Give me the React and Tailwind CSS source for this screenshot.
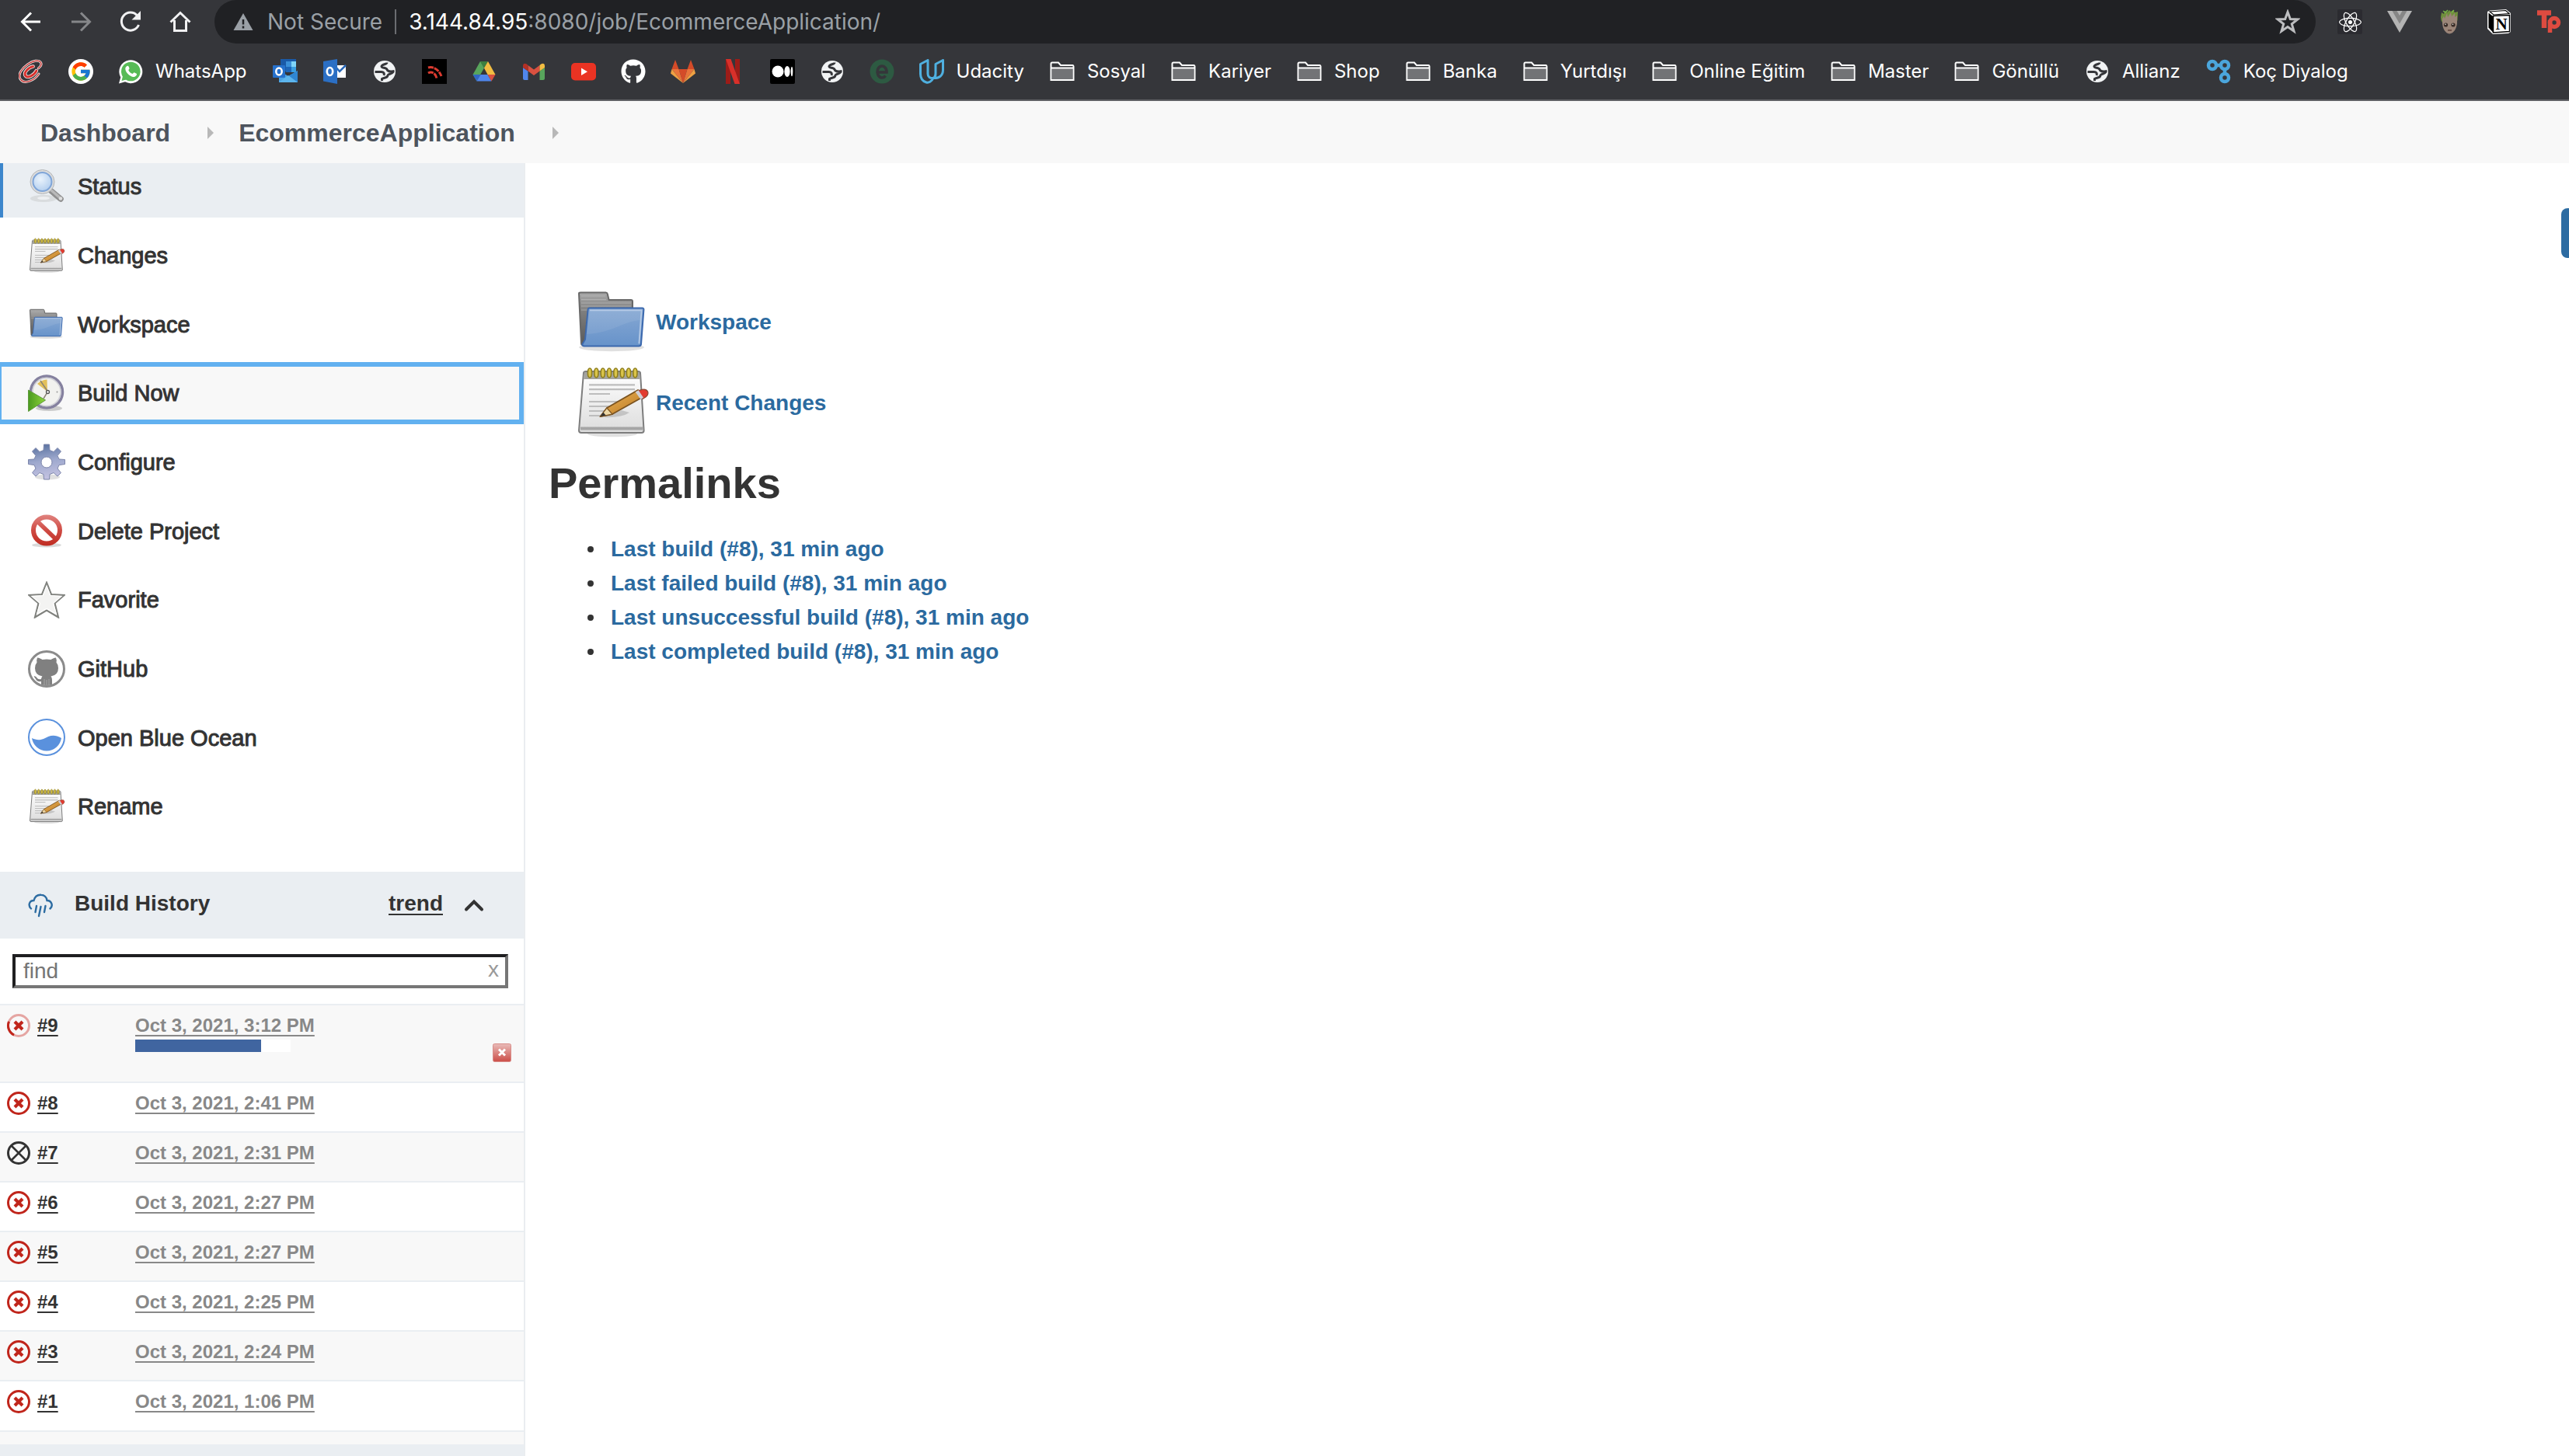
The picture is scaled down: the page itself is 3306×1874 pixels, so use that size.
import React from "react";
import { FcGoogle } from "react-icons/fc";
import { FaGithub, FaReact } from "react-icons/fa";

/* ---------- toolbar icons ---------- */

const BackIcon = () => (
  <svg viewBox="0 0 32 32" className="size-8" fill="none" stroke="#fff" strokeWidth="3">
    <path d="M28 16H5M16 4.500L4.500 16L16 27.500" />
  </svg>
);
const ForwardIcon = () => (
  <svg viewBox="0 0 32 32" className="size-8" fill="none" stroke="#86878a" strokeWidth="3">
    <path d="M4 16H27M16 4.500L27.500 16L16 27.500" />
  </svg>
);
const ReloadIcon = () => (
  <svg viewBox="0 0 32 32" className="size-8" fill="none" stroke="#f1f1f2" strokeWidth="3">
    <path d="M26.500 20A11.500 11.500 0 1 1 24.500 8" />
    <path d="M29 2V13.500H17.500Z" fill="#f1f1f2" stroke="none" />
  </svg>
);
const HomeIcon = () => (
  <svg viewBox="0 0 32 32" className="size-8" fill="none" stroke="#f1f1f2" strokeWidth="3">
    <path d="M8.500 14V27.500H23.500V14M3.500 16.500L16 4.500L28.500 16.500" />
  </svg>
);
const WarningIcon = () => (
  <svg viewBox="0 0 26 24" className="h-6 w-[26px]">
    <path d="M13 1L25.500 23H0.500Z" fill="#9aa0a6" />
    <path d="M13 9V15.500M13 17.500V20.500" stroke="#202124" strokeWidth="2.500" />
  </svg>
);
const StarIcon = () => (
  <svg viewBox="0 0 32 32" className="size-8">
    <path
      d="M16 3.500L19.300 12.600L28.800 12.900L21.300 18.800L24 28L16 22.500L8 28L10.700 18.800L3.200 12.900L12.700 12.600Z"
      fill="none"
      stroke="#bdbec0"
      strokeWidth="3"
    />
  </svg>
);

const ReactExt = () => (
  <span className="flex size-8 items-center justify-center rounded-xs bg-[#2b2b30]">
    <FaReact className="size-[29px] text-white" />
  </span>
);
const VueExt = () => (
  <svg viewBox="0 0 32 32" className="size-8">
    <path d="M0 2H32L16 30Z" fill="#b4b4b4" />
    <path d="M6.500 2H12.500L16 8L19.500 2H25.500L16 18.500Z" fill="#868686" />
  </svg>
);
const GrootExt = () => (
  <svg viewBox="0 0 32 32" className="size-8">
    <path d="M5 10L6 4L9 6L10 2L13 4L16 1L18 3L21 1L23 4L27 3L26.500 14L25 17H7L5.500 14Z" fill="#6f8f3c" />
    <path d="M8 2L11 4L14 1M19 4L22 1" stroke="#7ab648" strokeWidth="1.500" fill="none" />
    <path d="M7 12L9 9L10 12L13 5L14 10L18 4L19 9L23 5L23 10L26 8V18C25 25 22 31 16 31.500C11 31 7.500 25 7 18Z" fill="#9b8578" />
    <circle cx="11.500" cy="20" r="2.600" fill="#3a2d27" />
    <circle cx="21" cy="20" r="2.600" fill="#3a2d27" />
    <circle cx="11" cy="19.300" r="0.800" fill="#eee" />
    <circle cx="20.500" cy="19.300" r="0.800" fill="#eee" />
    <path d="M14 27H19" stroke="#5d4137" strokeWidth="1.500" />
  </svg>
);
const NotionExt = () => (
  <svg viewBox="0 0 32 32" className="size-8">
    <path d="M1 3L4 1.500L25 0L31 5V29L28 31L8 32L1 25Z" fill="#fff" />
    <path d="M2.500 4.500L8 9V29.500L2.500 23.500Z" fill="#000" />
    <path d="M4 3L24.500 1.500L29 5.500L9 7Z" fill="#fff" stroke="#000" strokeWidth="1.200" />
    <path d="M8.500 8.500L29.500 7.500V28.500L8.500 30Z" fill="#fff" stroke="#000" strokeWidth="1.500" />
    <text x="19" y="26" textAnchor="middle" className="font-['Liberation_Serif'] text-[21px] font-bold" fill="#000">
      N
    </text>
  </svg>
);
const TpExt = () => (
  <svg viewBox="0 0 32 32" className="size-8" fill="none" stroke="#de4b40">
    <path d="M1 4.500H19M10 4V24" strokeWidth="6.500" />
    <circle cx="23" cy="17" r="5.500" strokeWidth="5.500" />
    <path d="M17.500 14V30" strokeWidth="5.500" />
  </svg>
);

/* ---------- bookmark icons ---------- */

const SwirlFav = () => (
  <svg viewBox="0 0 32 32" className="size-8" fill="none" strokeLinecap="round">
    <g transform="rotate(-38 16 16)">
      <path d="M22 24.500C12 28 -1 24 -1 16C-1 8 10 5.500 18 6C27 6.500 33 10 33 14C33 17 30 18.500 26 18.500" stroke="#ece2e2" strokeWidth="3" />
      <path d="M22 24.500C12 28 -1 24 -1 16C-1 8 10 5.500 18 6C27 6.500 33 10 33 14C33 17 30 18.500 26 18.500" stroke="#c8322f" strokeWidth="1.200" />
      <path d="M22 12.500C17 9.500 7 11 7 16C7 21 17 22 22 19.500" stroke="#f3e3e3" strokeWidth="4.600" />
      <path d="M22 12.500C17 9.500 7 11 7 16C7 21 17 22 22 19.500" stroke="#d8302c" strokeWidth="2.800" />
    </g>
  </svg>
);
const GoogleFav = () => (
  <span className="flex size-8 items-center justify-center rounded-full bg-white">
    <FcGoogle className="size-7" />
  </span>
);
const WhatsappFav = () => (
  <svg viewBox="0 0 32 32" className="size-8">
    <path d="M1 31.500L3.200 23.500A15 15 0 1 1 9 29.300Z" fill="#fff" />
    <circle cx="16.300" cy="16" r="12.300" fill="#57bb56" />
    <path d="M4.500 28L6 22L10.500 26.500Z" fill="#57bb56" />
    <path
      d="M11.500 9C13 8.300 13.500 9 14.500 12C14.500 13 13.500 13.500 13.300 14.300C14.500 16.800 16 18 18.500 19C19.500 18.500 20 17.500 20.700 17.200L24 19C24.300 21 22 23 19.800 23C15 22.700 9.300 17 9.300 12.500C9.300 11 10 9.800 11.500 9Z"
      fill="#fff"
    />
  </svg>
);
const OutlookFav = () => (
  <svg viewBox="0 0 32 32" className="size-8">
    <path d="M10 0H30V16H10Z" fill="#1a5aa8" />
    <path d="M17 3H24V10H17Z" fill="#3a8fd8" />
    <path d="M24 3H30V10H24Z" fill="#7fd4f7" />
    <path d="M17 10H24V17H17Z" fill="#1e66b8" />
    <path d="M24 10H30V17H24Z" fill="#3a9ee0" />
    <path d="M8 15L20 22L32 15V30H8Z" fill="#4aa3e4" />
    <path d="M20 22L32 15V30Z" fill="#2f86d2" />
    <path d="M8 30L20 21L32 30Z" fill="#5db5ec" />
    <rect x="0" y="8" width="16" height="16" rx="1" fill="#2671cc" />
    <ellipse cx="8" cy="16" rx="3.700" ry="4.500" fill="none" stroke="#fff" strokeWidth="2.500" />
  </svg>
);
const OutlookOldFav = () => (
  <svg viewBox="0 0 32 32" className="size-8">
    <path d="M16 8H30V24H16Z" fill="#fff" />
    <path d="M17 10L22 16L30 8" stroke="#2868b8" strokeWidth="2.500" fill="none" />
    <path d="M1 3L19 0V32L1 28.500Z" fill="#2b6fc4" />
    <ellipse cx="9.500" cy="16" rx="3.700" ry="5" fill="none" stroke="#fff" strokeWidth="2.700" />
  </svg>
);
const GlobeFav = () => (
  <svg viewBox="0 0 32 32" className="size-8">
    <circle cx="16" cy="16" r="14" fill="#f1f3f4" />
    <g fill="none" stroke="#35363a" strokeWidth="3" strokeLinejoin="round">
      <path d="M3.500 16.500H11.500C15 16.500 16 18.500 15 21" />
      <path d="M19 4.500C19 7 12.500 6.500 12 9.500C12 12 18 10.500 19 13.500C20 17 24 16 28.500 15.500" />
      <path d="M12.500 28V25.500C15 23.500 19.500 25 20 21C20.500 18.500 25 20 27 16.500" />
    </g>
  </svg>
);
const RedArcsFav = () => (
  <svg viewBox="0 0 32 32" className="size-8">
    <rect width="32" height="32" fill="#000" />
    <path d="M8 11C15 9 22 14 25 22M8 18C13 15 18 19 19 25" fill="none" stroke="#dc3b30" strokeWidth="3" strokeDasharray="7 1" />
  </svg>
);
const DriveFav = () => (
  <svg viewBox="0 0 32 32" className="size-8">
    <path d="M11 3H21L16 11.500Z" fill="#3c7f3f" />
    <path d="M11 3L16 11.500L6.500 28.500L1.500 20Z" fill="#58a55c" />
    <path d="M21 3L30.500 20H20.500L16 11.500Z" fill="#f2bd42" />
    <path d="M1.500 20H11.500L6.500 28.500Z" fill="#3066c4" />
    <path d="M11.500 20H20.500L25.500 28.500H6.500Z" fill="#5086ec" />
    <path d="M20.500 20H30.500L25.500 28.500Z" fill="#d85140" />
  </svg>
);
const GmailFav = () => (
  <svg viewBox="0 0 32 32" className="size-8">
    <path d="M2 11L8.500 15.500V27H4C3 27 2 26 2 25Z" fill="#5086ec" />
    <path d="M30 11L23.500 15.500V27H28C29 27 30 26 30 25Z" fill="#58a55c" />
    <path d="M8.500 8L16 13.500L23.500 8V15.500L16 21L8.500 15.500Z" fill="#d85140" />
    <path d="M2 11V9C2 5.500 5 4.500 8.500 8V15.500Z" fill="#b33025" />
    <path d="M30 11V9C30 5.500 27 4.500 23.500 8V15.500Z" fill="#f2bd42" />
  </svg>
);
const YoutubeFav = () => (
  <svg viewBox="0 0 32 32" className="size-8">
    <rect x="0" y="5" width="32" height="22.500" rx="5" fill="#ea3323" />
    <path d="M13 11.500L21 16.200L13 21Z" fill="#fff" />
  </svg>
);
const GithubFav = () => <FaGithub className="size-8 text-white" />;
const GitlabFav = () => (
  <svg viewBox="0 0 32 32" className="size-8">
    <path d="M6 1L10.500 13H1.500ZM26 1L21.500 13H30.500Z" fill="#d44b28" />
    <path d="M10.500 13H21.500L16 31Z" fill="#d44b28" />
    <path d="M1.500 13H10.500L16 31Z" fill="#e8743b" />
    <path d="M30.500 13H21.500L16 31Z" fill="#e8743b" />
    <path d="M1.500 13L0 18.500L16 31ZM30.500 13L32 18.500L16 31Z" fill="#efa143" />
  </svg>
);
const NetflixFav = () => (
  <svg viewBox="0 0 32 32" className="size-8">
    <path d="M7 0H13V32H7ZM19 0H25V32H19Z" fill="#9c1c18" />
    <path d="M7 0H13.500L25 32H18.500Z" fill="#d8302a" />
  </svg>
);
const MediumFav = () => (
  <svg viewBox="0 0 32 32" className="size-8">
    <rect width="32" height="32" rx="2" fill="#000" />
    <circle cx="10" cy="16" r="7.500" fill="#fff" />
    <ellipse cx="22" cy="16" rx="3.600" ry="7" fill="#fff" />
    <ellipse cx="28" cy="16" rx="1.300" ry="6.300" fill="#fff" />
  </svg>
);
const EFav = () => (
  <svg viewBox="0 0 32 32" className="size-8">
    <circle cx="16" cy="16" r="15.500" fill="#2d5a42" />
    <path d="M10 17H22A6 7.500 0 1 0 20.500 21.500" fill="none" stroke="#35363a" strokeWidth="3.600" />
  </svg>
);
const UdacityFav = () => (
  <svg viewBox="0 0 32 32" className="size-8" fill="none" stroke="#4fb0e0" strokeWidth="3" strokeLinejoin="round">
    <path d="M1.500 6.500L11 1.500V19C11 23 14 25 18 24.500C16 29 12 31 9 30C4 28.500 1.500 25 1.500 19Z" />
    <path d="M21 6.500L30.500 1.500V14C30.500 21 26 25 18 24.500C21 23 21 21 21 18Z" />
  </svg>
);
const FolderFav = () => (
  <svg viewBox="0 0 32 32" className="size-8">
    <path d="M1.500 27V6C1.500 4.500 2.500 4.500 3 4.500H11L14 8H29.500C30.500 8 30.500 9 30.500 9.500V27Z" fill="#35363a" stroke="#fff" strokeWidth="2" />
    <path d="M3 12H29V26H3Z" fill="#727376" />
    <path d="M2 11.500H30" stroke="#fff" strokeWidth="2" />
  </svg>
);
const KocFav = () => (
  <svg viewBox="0 0 32 32" className="size-8" fill="none" stroke="#4ba6dc" strokeWidth="4.500">
    <circle cx="8" cy="8" r="5" />
    <circle cx="24" cy="8" r="5" />
    <circle cx="24" cy="24" r="5" />
    <path d="M13 8H19M24 13V19" />
  </svg>
);

const bookmarks = [
  { Icon: SwirlFav, name: "Swirl" },
  { Icon: GoogleFav, name: "Google" },
  { Icon: WhatsappFav, text: "WhatsApp" },
  { Icon: OutlookFav, name: "Outlook" },
  { Icon: OutlookOldFav, name: "Outlook mail" },
  { Icon: GlobeFav, name: "Site" },
  { Icon: RedArcsFav, name: "Arcs" },
  { Icon: DriveFav, name: "Drive" },
  { Icon: GmailFav, name: "Gmail" },
  { Icon: YoutubeFav, name: "YouTube" },
  { Icon: GithubFav, name: "GitHub" },
  { Icon: GitlabFav, name: "GitLab" },
  { Icon: NetflixFav, name: "Netflix" },
  { Icon: MediumFav, name: "Medium" },
  { Icon: GlobeFav, name: "Site" },
  { Icon: EFav, name: "E" },
  { Icon: UdacityFav, text: "Udacity" },
  { Icon: FolderFav, text: "Sosyal" },
  { Icon: FolderFav, text: "Kariyer" },
  { Icon: FolderFav, text: "Shop" },
  { Icon: FolderFav, text: "Banka" },
  { Icon: FolderFav, text: "Yurtdışı" },
  { Icon: FolderFav, text: "Online Eğitim" },
  { Icon: FolderFav, text: "Master" },
  { Icon: FolderFav, text: "Gönüllü" },
  { Icon: GlobeFav, text: "Allianz" },
  { Icon: KocFav, text: "Koç Diyalog" },
];

function BrowserChrome() {
  return (
    <header className="border-b-2 border-[#5f6064] bg-[#35363a] font-['Inter',sans-serif]">
      <div className="flex h-14 items-center pr-2.5 pl-6">
        <div className="flex gap-8">
          <button aria-label="Back"><BackIcon /></button>
          <button aria-label="Forward"><ForwardIcon /></button>
          <button aria-label="Reload"><ReloadIcon /></button>
          <button aria-label="Home"><HomeIcon /></button>
        </div>
        <div className="mx-7 flex h-full flex-1 items-center rounded-full bg-[#202124] pr-5 pl-6 text-[28px]">
          <WarningIcon />
          <span className="ml-[18px] text-[#9aa0a6]">Not Secure</span>
          <span className="mx-4 h-8 w-0.5 bg-[#6b6d71]" />
          <label htmlFor="address" className="text-white">3.144.84.95</label>
          <input
            id="address"
            className="min-w-0 flex-1 bg-transparent text-[#9aa0a6] outline-none"
            defaultValue=":8080/job/EcommerceApplication/"
          />
          <button aria-label="Bookmark this page"><StarIcon /></button>
        </div>
        <div className="flex gap-8">
          <button aria-label="React tools"><ReactExt /></button>
          <button aria-label="Vue tools"><VueExt /></button>
          <button aria-label="Groot"><GrootExt /></button>
          <button aria-label="Notion"><NotionExt /></button>
          <button aria-label="Tp"><TpExt /></button>
        </div>
      </div>
      <nav className="flex h-[72px] items-center gap-8 px-6 text-2xl text-white">
        {bookmarks.map(({ Icon, text, name }, i) => (
          <a key={i} href="#" aria-label={text || name} className="flex shrink-0 items-center gap-4">
            <Icon />
            {text && <span className="pr-px">{text}</span>}
          </a>
        ))}
      </nav>
    </header>
  );
}

/* ---------- page icons ---------- */

const SearchIcon = ({ className }) => (
  <svg viewBox="0 0 48 48" className={className}>
    <defs>
      <radialGradient id="lens" cx="0.4" cy="0.35" r="0.8">
        <stop offset="0" stopColor="#eaf3fc" />
        <stop offset="1" stopColor="#a9c8ec" />
      </radialGradient>
    </defs>
    <ellipse cx="20" cy="39.500" rx="17" ry="4.500" fill="#d9dcde" />
    <ellipse cx="20" cy="39" rx="8" ry="2" fill="#eef0f2" />
    <path d="M29 29L42 40" stroke="#8f8f8f" strokeWidth="7.500" strokeLinecap="round" />
    <path d="M29 28L41 38.500" stroke="#b9b9b9" strokeWidth="3.500" />
    <circle cx="42" cy="39.500" r="2.300" fill="#dedede" />
    <circle cx="18.500" cy="18" r="15.500" fill="#dcdcdc" stroke="#b3b6b8" strokeWidth="1" />
    <circle cx="18.500" cy="18" r="12" fill="url(#lens)" stroke="#7fa5d8" strokeWidth="2" />
  </svg>
);

const NotepadIcon = ({ className }) => (
  <svg viewBox="0 0 48 48" className={className}>
    <defs>
      <linearGradient id="paper" x1="0" y1="0" x2="0" y2="1">
        <stop offset="0" stopColor="#ffffff" />
        <stop offset="1" stopColor="#dcdcdc" />
      </linearGradient>
      <linearGradient id="pencil" x1="0" y1="0" x2="1" y2="1">
        <stop offset="0" stopColor="#edb55c" />
        <stop offset="1" stopColor="#b9771e" />
      </linearGradient>
    </defs>
    <ellipse cx="24" cy="44.300" rx="16" ry="1.800" fill="#000" opacity="0.120" />
    <path d="M5.500 5Q5.700 4 7 4H40.500Q41.800 4 42 5L44.300 42Q44.300 43.500 42.800 43.500H4Q2.500 43.500 2.500 42Z" fill="url(#paper)" stroke="#7d7d7d" strokeWidth="1" />
    <path d="M6 4.500H41.500L41.800 9H5.600Z" fill="#a3a39e" />
    <path d="M3.500 40.700H43.500" stroke="#a5a5a5" strokeWidth="2" />
    <g fill="#dbc54a" stroke="#8f7f1c" strokeWidth="0.800">
      {[9.500, 13.700, 17.900, 22, 26.200, 30.400, 34.500, 38.700].map((x) => (
        <ellipse key={x} cx={x} cy="5" rx="1.300" ry="3" />
      ))}
    </g>
    <path d="M9 12.700H38.500M9 15.600H38.500M9 18.500H22.500M9 23.500H31M9 26.500H28M9 29.500H25M9 32.500H18" stroke="#bdbdbd" strokeWidth="1.100" />
    <path d="M18 33.500Q30 34 35 30.500L30 29Z" fill="#000" opacity="0.150" />
    <path d="M16.300 33L20.500 27.500L40.500 16L44.500 20L24 31.500Z" fill="url(#pencil)" stroke="#7b5320" strokeWidth="0.900" strokeLinejoin="round" />
    <path d="M16.300 33L20.500 27.500L24 31.500Z" fill="#ecd7a5" stroke="#7b5320" strokeWidth="0.600" />
    <path d="M16.300 33L18.200 30.400L19.800 32.300Z" fill="#333" />
    <path d="M40.500 16.500L43 15.700Q45.700 15 46.800 17Q47.500 19 45.500 20.500L43.500 21.700Z" fill="#e23b30" stroke="#8c4a35" strokeWidth="0.600" />
    <path d="M38.800 17.200L40.800 16.100L44 20.900L42.200 22Z" fill="#cfcfd6" />
  </svg>
);

const FolderIcon = ({ className }) => (
  <svg viewBox="0 0 48 48" className={className}>
    <defs>
      <linearGradient id="back" x1="0" y1="0" x2="0" y2="1">
        <stop offset="0" stopColor="#a9a9a9" />
        <stop offset="0.350" stopColor="#7f7f7f" />
        <stop offset="1" stopColor="#585858" />
      </linearGradient>
      <linearGradient id="front" x1="0" y1="0" x2="0" y2="1">
        <stop offset="0" stopColor="#87a8d3" />
        <stop offset="1" stopColor="#6793ca" />
      </linearGradient>
    </defs>
    <ellipse cx="23.500" cy="40.500" rx="21" ry="2.600" fill="#000" opacity="0.120" />
    <path d="M2.500 6Q2.500 5.300 3.500 5.300H19.800Q20.700 5.300 20.900 6.200L21.800 10H36Q37 10 37 11V39H5Q4 39 4 38Z" fill="url(#back)" stroke="#686868" strokeWidth="1" />
    <path d="M4 7.500H19.500M4 9.800H20M4 12H36M4 14H36M4 16.500H8" stroke="#c0c0c0" strokeWidth="0.600" opacity="0.600" />
    <path d="M8.300 16.200Q8.400 15.300 9.300 15.300H43.300Q44.300 15.300 44.200 16.300L42.500 38.500Q42.300 39.700 41 39.700H6Q4.500 39.700 4.700 38.500L6.500 35.500Z" fill="url(#front)" stroke="#3c69ae" strokeWidth="1" />
    <path d="M9.500 16.700H42.800L41.200 38.200" fill="none" stroke="#b5cae6" strokeWidth="0.900" />
    <path d="M9.300 17H42.300L42 23C30 24 25 31 7.500 32Z" fill="#fff" opacity="0.080" />
  </svg>
);

const BuildIcon = ({ className }) => (
  <svg viewBox="0 0 48 48" className={className}>
    <defs>
      <linearGradient id="play" x1="0" y1="0" x2="1" y2="0">
        <stop offset="0" stopColor="#4a9a1f" />
        <stop offset="1" stopColor="#8fd63c" />
      </linearGradient>
    </defs>
    <ellipse cx="27" cy="43.500" rx="17" ry="3.500" fill="#000" opacity="0.180" />
    <circle cx="24" cy="22.500" r="20.500" fill="#f2f2ef" stroke="#85819f" strokeWidth="3.500" />
    <circle cx="24" cy="22.500" r="18" fill="none" stroke="#cfcfd6" strokeWidth="1.500" />
    <path d="M25 22L12 12Q17 7 24.500 6.500Z" fill="#e3c05a" />
    <path d="M16 8L25.500 22L20 31" fill="none" stroke="#8a8375" strokeWidth="1.500" />
    <circle cx="25.500" cy="22.500" r="2" fill="#fff" stroke="#555" strokeWidth="1.300" />
    <circle cx="37.500" cy="22.500" r="1" fill="#999" />
    <path d="M0.500 20L22.500 33L0.500 47.500Z" fill="url(#play)" stroke="#5f9a3c" strokeWidth="1" />
  </svg>
);

const GearIcon = ({ className }) => (
  <svg viewBox="0 0 48 48" className={className}>
    <defs>
      <linearGradient id="gear" gradientUnits="userSpaceOnUse" x1="20" y1="0" x2="28" y2="48">
        <stop offset="0" stopColor="#58719f" />
        <stop offset="0.450" stopColor="#9da8cd" />
        <stop offset="1" stopColor="#c9c6e4" />
      </linearGradient>
    </defs>
    <ellipse cx="25" cy="43" rx="16" ry="3.500" fill="#000" opacity="0.120" />
    <path
      fill="url(#gear)"
      stroke="#7d86ab"
      strokeWidth="1"
      fillRule="evenodd"
      strokeLinejoin="round"
      d="M20.500 1H27.500L28 8.500L33 10.500L38 5.500L42.500 10L38 15.500L40 20L47.500 20.500V26.500L40 27.500L38 32L42.500 37.500L38 42L33 37.500L28 39.500L27.500 46H20.500L20 39.500L15 37.500L10 42L5.500 37.500L10 32L8 27.500L0.500 26.500V20.500L8 20L10 15.500L5.500 10L10 5.500L15 10.500L20 8.500ZM24 17A7 7 0 1 0 24 31A7 7 0 1 0 24 17Z"
    />
  </svg>
);

const DeleteIcon = ({ className }) => (
  <svg viewBox="0 0 48 48" className={className}>
    <defs>
      <linearGradient id="ban" gradientUnits="userSpaceOnUse" x1="0" y1="4" x2="0" y2="44">
        <stop offset="0" stopColor="#e0827e" />
        <stop offset="0.500" stopColor="#cf4a43" />
        <stop offset="1" stopColor="#bf2a20" />
      </linearGradient>
    </defs>
    <ellipse cx="24" cy="42.500" rx="19" ry="3" fill="#000" opacity="0.150" />
    <circle cx="24" cy="23.500" r="17" fill="#fff" stroke="url(#ban)" strokeWidth="6" />
    <path d="M12 12L36 35" stroke="url(#ban)" strokeWidth="5.500" />
  </svg>
);

const FavoriteIcon = ({ className }) => (
  <svg viewBox="0 0 48 48" className={className}>
    <path
      d="M24 2L30 17L46.500 18L34.500 28.500L39 46.500L24 37.500L9 46.500L13.500 28.500L1.500 18L18 17Z"
      fill="#f3f3f2"
      stroke="#80827e"
      strokeWidth="2.200"
    />
    <path d="M24 6L28.800 18.500L43 19.500L32.500 28.500L36.500 42.500L24 35.500L11.500 42.500L15.500 28.500L5 19.500L19.200 18.500Z" fill="none" stroke="#fff" strokeWidth="1.200" />
  </svg>
);

const GithubIcon = ({ className }) => (
  <span className={className + " flex items-center justify-center overflow-hidden rounded-full border-3 border-[#8b8b8b]"}>
    <svg viewBox="0 0 42 42" className="size-[42px]">
      <path
        d="M9 6.500C11.500 6.500 14 8 15.500 9Q21 8 26.500 9C28 8 30.500 6.500 33 6.500Q34.200 9.500 33.500 12.500Q36 15.500 36 20Q36 29 26.500 30.500Q28 32 28 35V42H14V37Q9 38 7 34L4.500 30.500Q7 29.500 9 33Q11 35 14 34Q14 32 15.500 30.500Q6 29 6 20Q6 15.500 8.500 12.500Q7.800 9.500 9 6.500Z"
        fill="#808080"
      />
      <path d="M18 34V42M21 35V42M24 34V42" stroke="#a5a5a5" strokeWidth="1" />
    </svg>
  </span>
);

const OceanIcon = ({ className }) => (
  <svg viewBox="0 0 48 48" className={className}>
    <circle cx="24" cy="24" r="23" fill="#fff" stroke="#5a91dd" strokeWidth="2" />
    <path d="M5 25C10 27 13 28.500 20 26C27 22.500 33 19 43 25A19.200 19.200 0 0 1 5 25Z" fill="#5a91dd" />
  </svg>
);

const tasks = [
  { label: "Status", Icon: SearchIcon, state: "active" },
  { label: "Changes", Icon: NotepadIcon },
  { label: "Workspace", Icon: FolderIcon },
  { label: "Build Now", Icon: BuildIcon, state: "focus" },
  { label: "Configure", Icon: GearIcon },
  { label: "Delete Project", Icon: DeleteIcon },
  { label: "Favorite", Icon: FavoriteIcon },
  { label: "GitHub", Icon: GithubIcon },
  { label: "Open Blue Ocean", Icon: OceanIcon },
  { label: "Rename", Icon: NotepadIcon },
];

const taskStyles = {
  active: "h-[70px] border-l-4 border-[#3c86cc] bg-[#eaeef2] pb-2.5 pl-8",
  focus: "h-20 border-6 border-l-2 border-[#62b1f0] bg-[#f8f8f8] pl-[34px]",
  plain: "h-20 pl-9",
};

function Tasks() {
  return (
    <nav className="flex min-h-[868px] flex-col justify-between">
      {tasks.map(({ label, Icon, state }) => (
        <a
          key={label}
          href="#"
          className={`flex items-center gap-4 text-[29px] text-[#333] [-webkit-text-stroke:1px_#333] ${taskStyles[state || "plain"]}`}
        >
          <Icon className="size-12 shrink-0" />
          <span className="pt-0.5">{label}</span>
        </a>
      ))}
    </nav>
  );
}

const StatusBadge = ({ kind }) => {
  if (kind === "aborted")
    return (
      <svg viewBox="0 0 32 32" className="size-8" fill="none" stroke="#333" strokeWidth="3">
        <circle cx="16" cy="16" r="13.500" />
        <path d="M7 7L25 25M25 7L7 25" strokeWidth="2.500" />
      </svg>
    );
  return (
    <svg viewBox="0 0 32 32" className="size-8" fill="none" stroke="#c0251b" strokeWidth="3">
      <circle cx="16" cy="16" r="13.500" stroke={kind === "running" ? "#e5a5a2" : "#c0251b"} />
      {kind === "running" && <path d="M3.500 10.800A13.500 13.500 0 0 0 10 28.100" />}
      <path d="M11 11L21 21M21 11L11 21" strokeWidth="4.200" />
    </svg>
  );
};

const StopIcon = () => (
  <svg viewBox="0 0 24 24" className="size-6">
    <defs>
      <linearGradient id="stop" x1="0" y1="0" x2="0" y2="1">
        <stop offset="0" stopColor="#e9bcb9" />
        <stop offset="1" stopColor="#cc4d47" />
      </linearGradient>
    </defs>
    <rect x="0.500" y="0.500" width="23" height="23" rx="2" fill="url(#stop)" stroke="#d98d89" />
    <path d="M8 7.500L16 15.500M16 7.500L8 15.500" stroke="#fff" strokeWidth="3" />
  </svg>
);

const builds = [
  { id: "#9", date: "Oct 3, 2021, 3:12 PM", kind: "running", progress: 81 },
  { id: "#8", date: "Oct 3, 2021, 2:41 PM", kind: "failed" },
  { id: "#7", date: "Oct 3, 2021, 2:31 PM", kind: "aborted" },
  { id: "#6", date: "Oct 3, 2021, 2:27 PM", kind: "failed" },
  { id: "#5", date: "Oct 3, 2021, 2:27 PM", kind: "failed" },
  { id: "#4", date: "Oct 3, 2021, 2:25 PM", kind: "failed" },
  { id: "#3", date: "Oct 3, 2021, 2:24 PM", kind: "failed" },
  { id: "#1", date: "Oct 3, 2021, 1:06 PM", kind: "failed" },
];

function BuildHistory() {
  return (
    <section className="mt-11 flex flex-1 flex-col">
      <div className="flex h-[86px] items-center bg-[#eaeef2] pr-12 pl-9 text-[28px] font-bold text-[#333]">
        <svg viewBox="0 0 32 32" className="size-8 shrink-0" fill="none" stroke="#2d6ca2" strokeWidth="2.400" strokeLinecap="round">
          <path d="M4 20.500C-0.500 16 2 10 7.500 10C9 4.500 13 2.500 17 2.800C21 3 24 6 24.500 10C30 10 33 16.500 28.500 20.500" />
          <path d="M11 17L9.500 25M16.500 18L14 30M22.500 17L21 25" />
        </svg>
        <h2 className="ml-7 flex-1 pb-1">Build History</h2>
        <a href="#" className="pb-1 underline decoration-2 underline-offset-4">trend</a>
        <button aria-label="Collapse" className="ml-6">
          <svg viewBox="0 0 32 32" className="size-8" fill="none" stroke="#333" strokeWidth="4" strokeLinecap="round">
            <path d="M6 21.500L16 11.500L26 21.500" />
          </svg>
        </button>
      </div>
      <div className="relative py-5 pr-5 pl-4">
        <input
          aria-label="Find build"
          placeholder="find"
          className="block h-11 w-full border-4 border-t-[#1f1f21] border-r-[#767676] border-b-[#767676] border-l-[#1f1f21] pl-2.5 text-[28px] text-[#333] outline-none placeholder:text-[#757575]"
        />
        <button aria-label="Clear" className="absolute top-[22px] right-8 text-[28px] leading-9 text-[#999]">x</button>
      </div>
      <table className="w-full text-left text-2xl leading-7 font-bold">
        <tbody>
          {builds.map((b, i) => (
            <tr
              key={b.id}
              className={`border-t-2 border-[#eaeef2] align-top ${b.progress ? "h-[100px]" : "h-16"} ${i % 2 ? "bg-white" : "bg-[#f8f8f8]"}`}
            >
              <td className="w-12 pt-2.5 pl-2"><StatusBadge kind={b.kind} /></td>
              <td className="w-[126px] pt-3">
                <a href="#" className="text-[#333] underline decoration-2 underline-offset-4">{b.id}</a>
              </td>
              <td className="pt-3">
                <a href="#" className="text-[#888] underline decoration-2 underline-offset-4">{b.date}</a>
                {b.progress && (
                  <div className="mt-1 h-4 w-[200px] bg-white" role="progressbar" aria-valuenow={b.progress} aria-label="Build progress">
                    <div className="h-full bg-[#4065a0]" style={{ width: `${b.progress}%` }} />
                  </div>
                )}
              </td>
              <td className="w-10 align-middle">
                {b.progress && <button aria-label="Stop build" className="block pt-6"><StopIcon /></button>}
              </td>
            </tr>
          ))}
        </tbody>
      </table>
      <div className="h-[18px] border-t-2 border-[#eaeef2] bg-[#f8f8f8]" />
      <div className="flex-1 bg-[#eaeef2]" />
    </section>
  );
}

const shortcuts = [
  { label: "Workspace", Icon: FolderIcon },
  { label: "Recent Changes", Icon: NotepadIcon },
];

const permalinks = [
  "Last build (#8), 31 min ago",
  "Last failed build (#8), 31 min ago",
  "Last unsuccessful build (#8), 31 min ago",
  "Last completed build (#8), 31 min ago",
];

const Arrow = () => (
  <svg viewBox="0 0 8 16" className="h-4 w-2">
    <path d="M0 0L8 8L0 16Z" fill="#b8b8b8" />
  </svg>
);

export default function App() {
  return (
    <div className="flex h-screen flex-col overflow-hidden bg-white font-['Liberation_Sans',sans-serif]">
      <BrowserChrome />
      <nav className="flex h-20 shrink-0 items-center bg-[#f8f8f8] pt-0.5 pl-[52px] text-[32px] font-bold text-[#4d545d]">
        <a href="#">Dashboard</a>
        <span className="mr-8 ml-12"><Arrow /></span>
        <a href="#">EcommerceApplication</a>
        <span className="ml-12"><Arrow /></span>
      </nav>
      <div className="flex min-h-0 flex-1">
        <aside className="flex w-[676px] shrink-0 flex-col border-r-2 border-[#eaedf0]">
          <Tasks />
          <BuildHistory />
        </aside>
        <main className="flex flex-1 items-start justify-between">
          <div className="pt-[156px] pl-[30px]">
            <div className="flex flex-col gap-2 pl-[34px]">
              {shortcuts.map(({ label, Icon }) => (
                <a key={label} href="#" className="flex items-center gap-2 text-[28px] font-bold text-[#2b6a9f]">
                  <Icon className="size-24" />
                  <span className="pt-0.5">{label}</span>
                </a>
              ))}
            </div>
            <h2 className="mt-6 text-[56px] leading-16 font-bold text-[#333]">Permalinks</h2>
            <ul className="mt-[31px] pl-[50px] text-[28px] leading-11">
              {permalinks.map((p) => (
                <li key={p} className="flex items-center gap-[22px] before:size-2 before:rounded-full before:bg-[#333]">
                  <a href="#" className="font-bold text-[#2b6a9f]">{p}</a>
                </li>
              ))}
            </ul>
          </div>
          <button aria-label="Open panel" className="mt-[58px] h-16 w-2.5 rounded-l-lg bg-[#2d6ca2]" />
        </main>
      </div>
    </div>
  );
}
